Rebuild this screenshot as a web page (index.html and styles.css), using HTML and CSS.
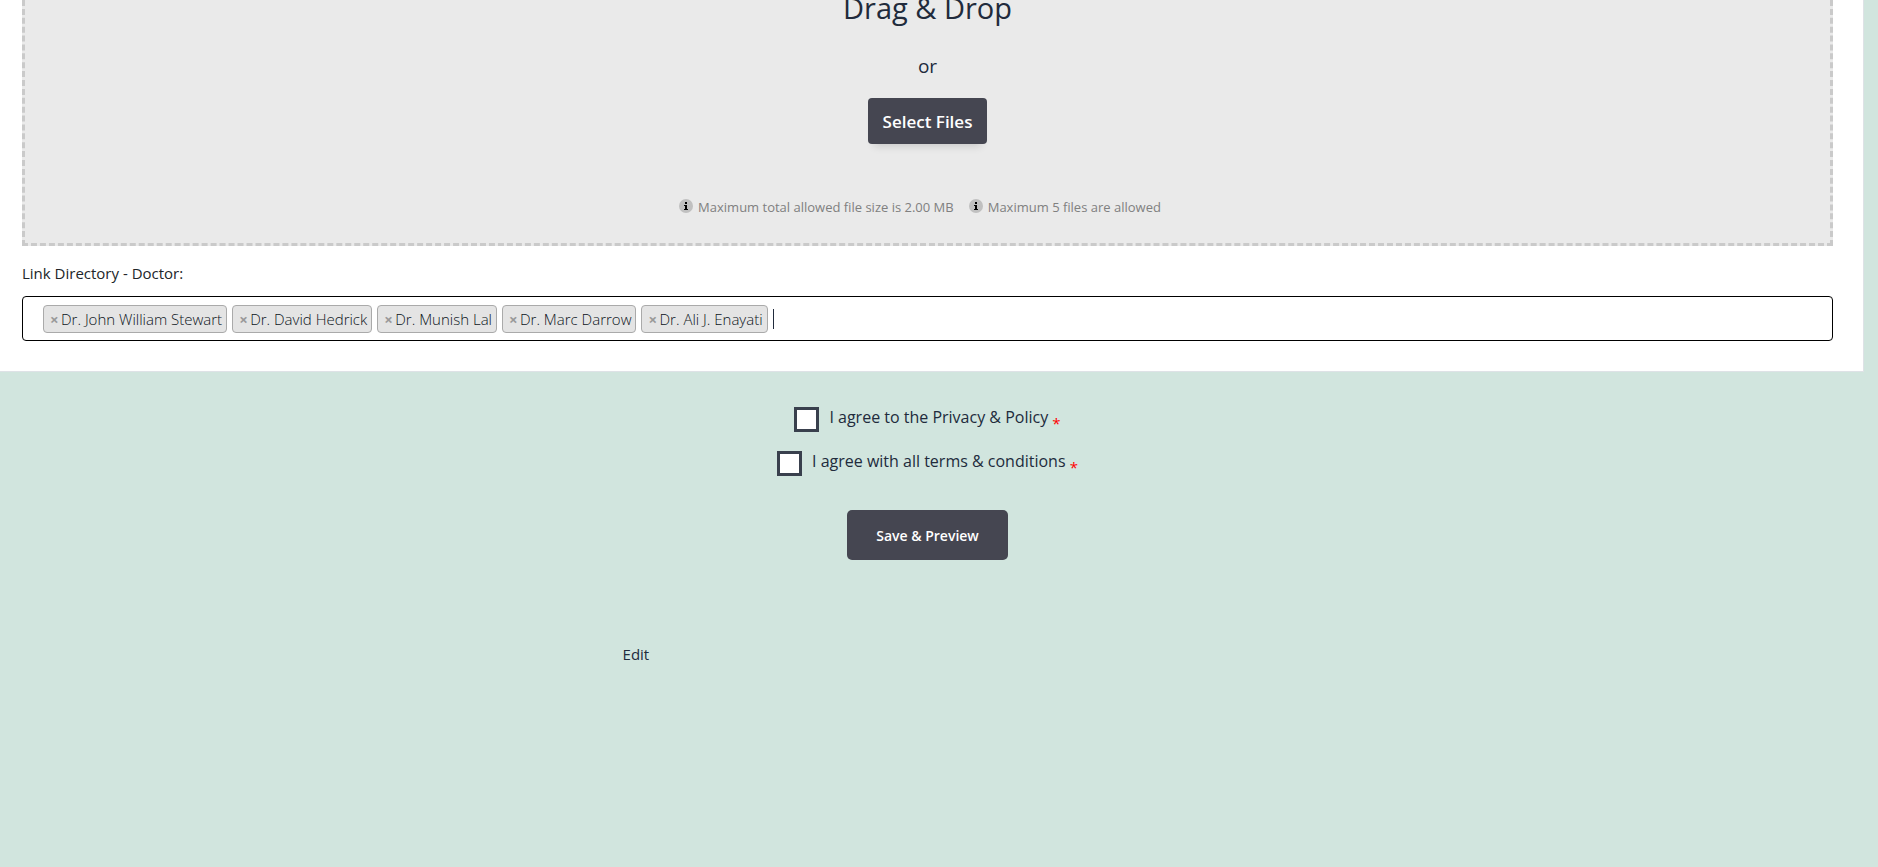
FILE: index.html
```html
<!DOCTYPE html>
<html lang="en">
<head>
    <meta charset="UTF-8">
    <meta name="viewport" content="width=device-width, initial-scale=1.0">
    <title>Directory</title>
    <link rel="stylesheet" href="styles.css">
</head>
<body>
<form>
    <div class="panel">
        <div class="dropzone">
            <h3>Drag &amp; Drop</h3>
            <span class="or">or</span>
            <button type="button" class="btn btn-select">Select Files</button>
            <div class="limits">
                <span class="limit"><svg class="info" viewBox="0 0 14 14"><circle cx="7" cy="7" r="7" fill="#c0c0c0"/><path d="M6 3h2v2H6zM5 6h3v4h1v1H5v-1h1V7H5z"/></svg>Maximum total allowed file size is 2.00 MB</span>
                <span class="limit"><svg class="info" viewBox="0 0 14 14"><circle cx="7" cy="7" r="7" fill="#c0c0c0"/><path d="M6 3h2v2H6zM5 6h3v4h1v1H5v-1h1V7H5z"/></svg>Maximum 5 files are allowed</span>
            </div>
        </div>
        <label class="field-label" for="doctor">Link Directory - Doctor:</label>
        <div class="select-box">
            <span class="tag"><button type="button">×</button>Dr. John William Stewart</span>
            <span class="tag"><button type="button">×</button>Dr. David Hedrick</span>
            <span class="tag"><button type="button">×</button>Dr. Munish Lal</span>
            <span class="tag"><button type="button">×</button>Dr. Marc Darrow</span>
            <span class="tag"><button type="button">×</button>Dr. Ali J. Enayati</span>
            <input type="text" id="doctor" class="search">
        </div>
    </div>
    <div class="footer">
        <div class="agree">
            <input type="checkbox" id="privacy">
            <label for="privacy">I agree to the Privacy &amp; Policy <span class="required">*</span></label>
        </div>
        <div class="agree">
            <input type="checkbox" id="terms">
            <label for="terms">I agree with all terms &amp; conditions <span class="required">*</span></label>
        </div>
        <button type="submit" class="btn btn-save">Save &amp; Preview</button>
    </div>
</form>
<div class="edit"><a href="#">Edit</a></div>
</body>
</html>
```
FILE: styles.css
```css
*{
    box-sizing: border-box;
}
body{
    margin: 0;
    background: #d1e5de;
    color: #212b3c;
    font: 15px/24px "Segoe UI", "Open Sans", "Noto Sans", sans-serif;
}
.panel{
    margin-right: 14px;
    padding: 0 30px 30px 22px;
    background: #fff;
    border: 1px solid #dee2e6;
    border-width: 0 1px 1px 0;
}
.dropzone{
    display: flex;
    flex-direction: column;
    align-items: center;
    padding-bottom: 26px;
    background: #eaeaea;
    border: 3px dashed #cacaca;
    border-top: 0;
}
.dropzone h3{
    margin: -12px 0 26px;
    font-size: 29px;
    font-weight: 400;
    line-height: 40px;
}
.or{
    margin-bottom: 20px;
    font-size: 19px;
}
.btn{
    border: 0;
    border-radius: 4px;
    background: #454651;
    color: #fff;
    font-family: inherit;
    font-weight: 600;
    cursor: pointer;
}
.btn-select{
    height: 46px;
    padding: 0 15px;
    font-size: 17px;
    box-shadow: 0 8px 8px -6px rgba(0,0,0,.15);
}
.limits{
    display: flex;
    margin-top: 53px;
    font-size: 13px;
    line-height: 20px;
    color: #808080;
}
.limit{
    display: flex;
    margin-right: 15px;
}
.info{
    width: 14px;
    height: 14px;
    margin: 2px 5px 0 0;
}
.field-label{
    display: block;
    margin: 15px 0 11px;
    color: #212529;
}
.select-box{
    display: flex;
    align-items: center;
    gap: 5px;
    height: 45px;
    padding: 0 20px;
    border: 1px solid #000;
    border-radius: 4px;
}
.tag{
    display: flex;
    align-items: center;
    height: 28px;
    padding: 0 4px 0 6px;
    background: #e4e4e4;
    border: 1px solid #aaa;
    border-radius: 4px;
    color: #0c1422;
    font-weight: 300;
    white-space: nowrap;
}
.tag button{
    width: 11px;
    padding: 0;
    border: 0;
    background: none;
    color: #999;
    font: bold 15px/24px "Open Sans", sans-serif;
    text-align: left;
    cursor: pointer;
}
.search{
    flex: 1;
    height: 20px;
    padding: 0;
    border: 0;
    border-left: 1px solid #212b3c;
    outline: 0;
    background: none;
    font: inherit;
}
.footer{
    display: flex;
    flex-direction: column;
    align-items: center;
    margin-right: 23px;
    padding-top: 35px;
}
.agree{
    display: flex;
    gap: 10px;
    margin-bottom: 19px;
}
.agree input{
    appearance: none;
    width: 25px;
    height: 25px;
    margin: 0;
    background: #fff;
    border: 3px solid #39404d;
}
.agree label{
    height: 25px;
    font-size: 16px;
    line-height: 20px;
}
.required{
    color: #f00;
    font-size: 15px;
    vertical-align: -6px;
    line-height: 1;
}
.btn-save{
    height: 50px;
    margin-top: 15px;
    padding: 0 29px;
    font-size: 14px;
    border-radius: 5px;
}
.edit{
    margin: 82px 0 0 33.15%;
}
.edit a{
    color: #212b3c;
    text-decoration: none;
}
```
